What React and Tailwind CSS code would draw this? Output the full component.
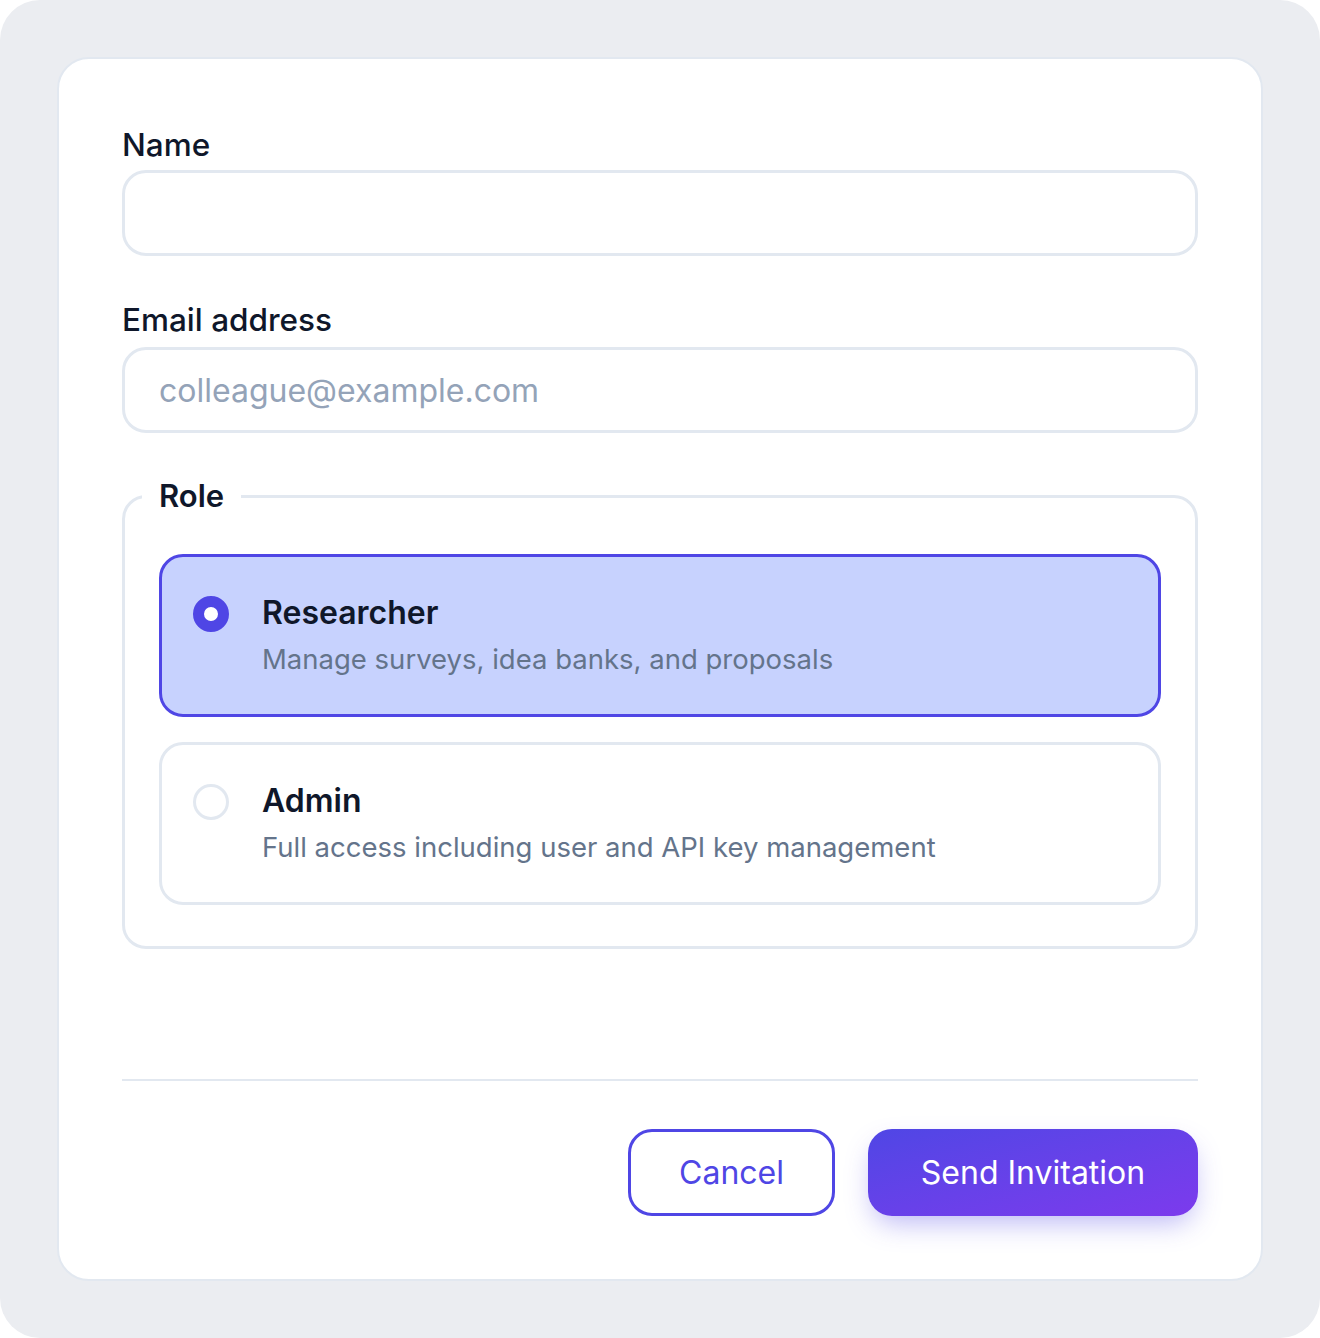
import { useState } from 'react';

const roles = [
    { id: 'researcher', title: 'Researcher', desc: 'Manage surveys, idea banks, and proposals' },
    { id: 'admin', title: 'Admin', desc: 'Full access including user and API key management' },
];

const App = () => {
    const [role, setRole] = useState('researcher');

    return (
        <div className="w-[1320px] h-[1338px] bg-white font-['Inter',sans-serif]">
            <div className="h-full rounded-[40px] bg-[#ebedf1] p-[57px]">
                <form className="h-full rounded-[32px] border-2 border-[#e2e8f0] bg-white px-[63px] pt-[67px] pb-[63px] flex flex-col">
                    {/* Name */}
                    <label className="block text-[31.5px] leading-[38px] font-medium text-[#0f172a]">Name</label>
                    <input
                        type="text"
                        className="mt-[6px] h-[86px] w-full rounded-[24px] border-[3px] border-[#e2e8f0] px-[34px] text-[32px] outline-none"
                    />

                    {/* Email */}
                    <label className="mt-[45px] block text-[31.5px] leading-[38px] font-medium text-[#0f172a]">Email address</label>
                    <input
                        type="email"
                        placeholder="colleague@example.com"
                        className="mt-[8px] h-[86px] w-full rounded-[24px] border-[3px] border-[#e2e8f0] px-[34px] text-[32px] text-[#0f172a] placeholder:text-[#94a3b8] outline-none"
                    />

                    {/* Role */}
                    <fieldset className="mt-[45px] rounded-[24px] border-[3px] border-[#e2e8f0] px-[34px] pt-[40px] pb-[41px]">
                        <legend className="-ml-[17px] px-[17px] text-[31px] leading-[36px] font-semibold text-[#0f172a]">Role</legend>
                        <div className="flex flex-col gap-[25px]">
                            {roles.map((r) => {
                                const active = role === r.id;
                                return (
                                    <button
                                        type="button"
                                        key={r.id}
                                        onClick={() => setRole(r.id)}
                                        className={`flex items-start gap-[33px] rounded-[24px] border-[3px] px-[31px] pt-[36px] pb-[37px] text-left ${active ? 'border-[#4f46e5] bg-[#c7d2fe]' : 'border-[#e2e8f0] bg-white'}`}
                                    >
                                        <span
                                            className={`mt-[3px] h-[36px] w-[36px] shrink-0 rounded-full ${active ? 'border-[11px] border-[#4f46e5] bg-white' : 'border-[3px] border-[#e2e8f0] bg-white'}`}
                                        ></span>
                                        <span className="flex flex-col">
                                            <span className="text-[32px] leading-[40px] font-semibold text-[#0f172a]">{r.title}</span>
                                            <span className="mt-[8px] text-[27.5px] leading-[36px] text-[#64748b]">{r.desc}</span>
                                        </span>
                                    </button>
                                );
                            })}
                        </div>
                    </fieldset>

                    {/* Footer */}
                    <div className="mt-auto border-t-2 border-[#e2e8f0] pt-[48px] flex justify-end gap-[33px]">
                        <button
                            type="button"
                            className="h-[87px] w-[207px] rounded-[24px] border-[3px] border-[#4f46e5] bg-white text-[32px] text-[#4f46e5]"
                        >
                            Cancel
                        </button>
                        <button
                            type="submit"
                            className="h-[87px] w-[330px] rounded-[24px] bg-gradient-to-br from-[#4f46e5] to-[#7c3aed] text-[32px] text-white shadow-[0_12px_28px_-6px_rgba(79,70,229,0.4)]"
                        >
                            Send Invitation
                        </button>
                    </div>
                </form>
            </div>
        </div>
    );
};

export default App;
